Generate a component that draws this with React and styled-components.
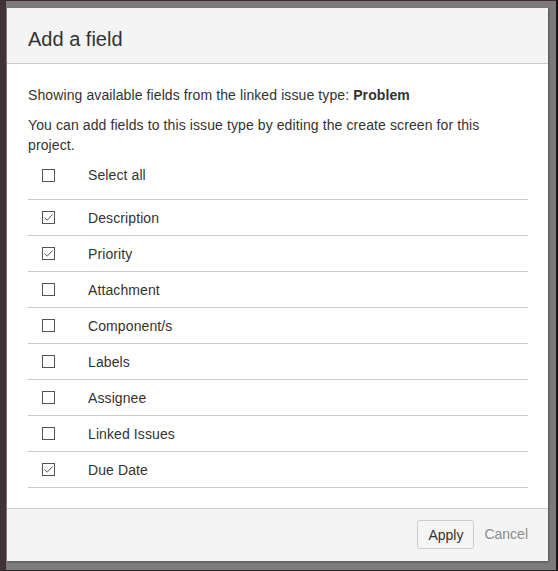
import React from "react";
import styled, { createGlobalStyle } from "styled-components";

const GlobalStyle = createGlobalStyle`
  html, body {
    margin: 0;
    padding: 0;
    background: #7b7b7b;
  }
  body {
    font-family: "Liberation Sans", Arial, sans-serif;
  }
`;

const Backdrop = styled.div`
  box-sizing: border-box;
  width: 558px;
  height: 571px;
  background: #7b7b7b;
  border-top: 1px solid #3a2a30;
  border-left: 6px solid #3f3337;
  border-right: 2px solid #1a1516;
  border-bottom: 1px solid #2d2226;
  padding: 7px 8px 8px 1px;
`;

const Dialog = styled.div`
  display: flex;
  flex-direction: column;
  width: 541px;
  height: 553px;
  background: #ffffff;
  box-shadow: 1px 1px 2px rgba(0, 0, 0, 0.35);
  color: #333333;
`;

const Header = styled.div`
  box-sizing: border-box;
  height: 56px;
  padding: 16px 20px 0 21px;
  background: #f4f4f4;
  border-bottom: 1px solid #cccccc;
`;

const Title = styled.h2`
  margin: 0;
  font-size: 20px;
  font-weight: normal;
  line-height: 30px;
  color: #333333;
`;

const Body = styled.div`
  flex: 1;
  padding: 21px 20px 0 21px;
`;

const Text = styled.p`
  max-width: 480px;
  margin: 0 0 ${(p) => p.$gap || 0}px;
  font-size: 14px;
  line-height: 20px;
  letter-spacing: 0.1px;
  color: #333333;
`;

const SelectAll = styled.div`
  display: flex;
  align-items: center;
  height: 36px;
  margin: 2px 0 6px;
`;

const FieldList = styled.ul`
  list-style: none;
  margin: 0;
  padding: 0;
  border-top: 1px solid #cccccc;
`;

const Field = styled.li`
  box-sizing: border-box;
  display: flex;
  align-items: center;
  height: 36px;
  border-bottom: 1px solid #cccccc;
`;

const Box = styled.span`
  box-sizing: border-box;
  display: inline-flex;
  width: 13px;
  height: 13px;
  margin-left: 14px;
  margin-right: 33px;
  border: 1px solid #555555;
  background: #ffffff;
`;

const Label = styled.span`
  font-size: 14px;
  line-height: 20px;
  letter-spacing: 0.1px;
  color: #333333;
`;

const Footer = styled.div`
  box-sizing: border-box;
  height: 53px;
  display: flex;
  justify-content: flex-end;
  align-items: flex-start;
  padding: 11px 20px 0;
  background: #f4f4f4;
  border-top: 1px solid #cccccc;
`;

const Button = styled.button`
  box-sizing: border-box;
  height: 29px;
  padding: 0 10px;
  font-family: "Liberation Sans", Arial, sans-serif;
  font-size: 14px;
  color: #333333;
  background: #f5f5f5;
  border: 1px solid #cccccc;
  border-radius: 3px;
`;

const CancelLink = styled.a`
  margin-left: 10px;
  font-size: 14px;
  line-height: 29px;
  color: #8c8c8c;
  text-decoration: none;
`;

const Checkbox = ({ checked }) => (
  <Box>
    {checked && (
      <svg width="11" height="11" viewBox="0 0 11 11">
        <polyline
          points="1.5,5.5 4.2,8.2 9.5,2.5"
          fill="none"
          stroke="#555"
          strokeWidth="1"
        />
      </svg>
    )}
  </Box>
);

const fields = [
  { name: "Description", checked: true },
  { name: "Priority", checked: true },
  { name: "Attachment", checked: false },
  { name: "Component/s", checked: false },
  { name: "Labels", checked: false },
  { name: "Assignee", checked: false },
  { name: "Linked Issues", checked: false },
  { name: "Due Date", checked: true },
];

export default function App() {
  return (
    <>
      <GlobalStyle />
      <Backdrop>
        <Dialog>
          <Header>
            <Title>Add a field</Title>
          </Header>
          <Body>
            <Text $gap={10}>
              Showing available fields from the linked issue type: <b>Problem</b>
            </Text>
            <Text>
              You can add fields to this issue type by editing the create screen
              for this project.
            </Text>
            <SelectAll>
              <Checkbox />
              <Label>Select all</Label>
            </SelectAll>
            <FieldList>
              {fields.map((f) => (
                <Field key={f.name}>
                  <Checkbox checked={f.checked} />
                  <Label>{f.name}</Label>
                </Field>
              ))}
            </FieldList>
          </Body>
          <Footer>
            <Button>Apply</Button>
            <CancelLink href="#">Cancel</CancelLink>
          </Footer>
        </Dialog>
      </Backdrop>
    </>
  );
}
